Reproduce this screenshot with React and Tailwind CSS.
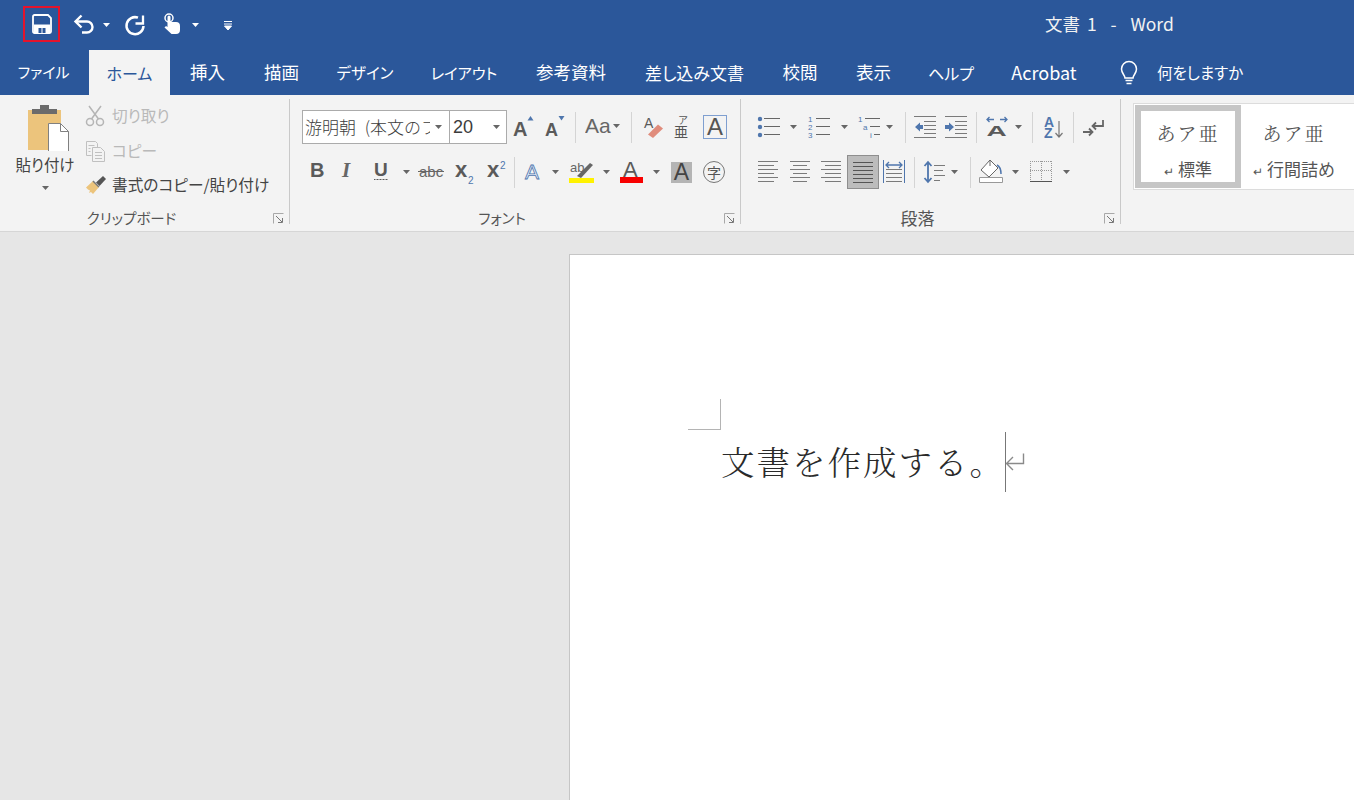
const GR = '#5a5a5a';
const BL = '#4f76ad';
const LN = '#7a7a7a';

function I({ w, h = 24, c = '', children }) {
  return (
    <svg width={w} height={h} viewBox={`0 0 ${w} ${h}`} className={`shrink-0 ${c}`} fill="none">
      {children}
    </svg>
  );
}
const Caret = ({ c = '', color = '#666' }) => (
  <I w={7} h={4} c={c}><path d="M0 0h7L3.5 4z" fill={color} /></I>
);
const Sep = ({ c = '' }) => <div className={`w-px h-[31px] bg-[#d4d4d4] shrink-0 ${c}`} />;
const T = ({ x, y, s, fill = GR, w = 700, st = 'normal', ff = 'Liberation Sans', children }) => (
  <text x={x} y={y} fontSize={s} fill={fill} fontWeight={w} fontStyle={st} fontFamily={ff}>{children}</text>
);
const Lines = ({ l, color = LN }) => (
  <g stroke={color} strokeWidth="1">
    {l.map(([a, b, y], i) => <path key={i} d={`M${a} ${y + 0.5}H${b}`} />)}
  </g>
);
const Launcher = () => (
  <I w={11} h={11}>
    <path d="M0.5 10.5V0.5H10.5" stroke="#a8a8a8" />
    <path d="M3 3l6 6M9.5 5v4.5H5" stroke="#777" />
  </I>
);
const GroupLabel = ({ c = 'text-[14.500px]', children }) => (
  <div className="mt-auto h-[18px] flex items-center shrink-0">
    <div className={`flex-1 text-center leading-[18px] text-[#555] [font-feature-settings:'palt'] ${c}`}>{children}</div>
    <div className="w-[26px] flex justify-end pr-[5px] pt-[1px]"><Launcher /></div>
  </div>
);

const tabs = [
  ['ファイル', 'w-[87px] text-white text-[15px]'],
  ['ホーム', 'w-[81px] ml-[2px] bg-[#f3f3f3] text-[#2b579a] text-[16px]'],
  ['挿入', 'w-[75px] text-white text-[17.500px]'],
  ['描画', 'w-[73px] text-white text-[17.500px]'],
  ['デザイン', 'w-[94px] text-white text-[15.500px]'],
  ['レイアウト', 'w-[104px] text-white text-[15.300px]'],
  ['参考資料', 'w-[110px] text-white text-[17.500px]'],
  ['差し込み文書', 'w-[137px] text-white text-[17px]'],
  ['校閲', 'w-[74px] text-white text-[17.500px]'],
  ['表示', 'w-[73px] text-white text-[17.500px]'],
  ['ヘルプ', 'w-[82px] text-white text-[16px]'],
  ['Acrobat', 'w-[104px] text-white text-[18px]'],
];

function TitleBar() {
  return (
    <div className="h-[50px] bg-[#2b579a] flex items-center shrink-0 text-white">
      <div className="ml-[23px] mt-[-2px] w-[37px] h-[36px] border-2 border-[#e4142c] flex items-center justify-center">
        <I w={20} h={20}>
          <path d="M1 2.500A1.500 1.500 0 0 1 2.500 1H16l3 3v13.500a1.500 1.500 0 0 1-1.500 1.500h-15A1.500 1.500 0 0 1 1 17.500z" stroke="#fff" strokeWidth="1.800" />
          <path d="M2 10.500h16V18H2z" fill="#fff" />
          <path d="M6.500 14h3v5h-3zM10.500 14h3v5h-3z" fill="#2b579a" />
        </I>
      </div>
      <I w={22} h={22} c="ml-[13px]">
        <path d="M8.500 1.500 2.500 7.500l6 6" stroke="#fff" strokeWidth="2.400" />
        <path d="M3 7.500h11a5.500 5.500 0 0 1 0 11H9" stroke="#fff" strokeWidth="2.400" />
      </I>
      <Caret c="ml-[8px]" color="#fff" />
      <I w={22} h={22} c="ml-[14px]">
        <path d="M14 3.700A8.500 8.500 0 1 0 19.500 12" stroke="#fff" strokeWidth="2.500" />
        <path d="M19 1.500V9.500H11.500" stroke="#fff" strokeWidth="2.300" />
      </I>
      <I w={18} h={24} c="ml-[17px]">
        <circle cx="6" cy="5" r="4" stroke="#fff" strokeWidth="1.500" />
        <path d="M4.500 4a1.500 1.500 0 0 1 3 0v5h5.500a4 4 0 0 1 4 4v4a4 4 0 0 1-4 4H8.500L1.500 14.500l1.500-1.500 1.500 1z" fill="#fff" />
      </I>
      <Caret c="ml-[11px]" color="#fff" />
      <I w={8} h={9} c="ml-[25px]">
        <path d="M0 0.500h8M0 3h8M0.500 5h7L4 9z" stroke="#fff" strokeWidth="1" fill="#fff" />
      </I>
      <div className="ml-[813px] text-[17.500px] leading-[20px] mt-[-2px] whitespace-pre [word-spacing:3px] text-[#f2f2f2] [font-feature-settings:'palt']">
        文書 1  -  Word
      </div>
    </div>
  );
}

function TabBar() {
  return (
    <div className="h-[45px] bg-[#2b579a] flex items-stretch shrink-0 [font-feature-settings:'palt']">
      {tabs.map(([t, c]) => (
        <div key={t} className={`flex items-center justify-center ${c}`}>{t}</div>
      ))}
      <I w={22} h={26} c="ml-[22px] self-center">
        <path d="M7 18c0-3-3.500-4.500-3.500-9a7.500 7.500 0 0 1 15 0C18.500 13.500 15 15 15 18z" stroke="#fff" strokeWidth="1.500" />
        <path d="M7.500 20.500h7M8.500 23.500h5" stroke="#fff" strokeWidth="1.500" />
      </I>
      <div className="ml-[17px] flex items-center text-white text-[15.500px]">何をしますか</div>
    </div>
  );
}

function Clipboard() {
  return (
    <div className="w-[289px] h-[128px] flex flex-col shrink-0">
      <div className="flex">
        <div className="ml-[15px] w-[60px] flex flex-col items-center">
          <I w={42} h={47} c="self-start ml-[13px] mt-[5px]">
            <path d="M0 6h33v40H0z" fill="#ecc47c" />
            <path d="M4 5h25v5H4zM12 1h9v5h-9z" fill="#6b6b6b" />
            <path d="M20.500 19.500h12l8 8v21h-20z" fill="#fff" stroke="#808080" />
            <path d="M32.500 19.500v8h8" stroke="#808080" />
          </I>
          <div className="mt-[4px] text-[15.500px] leading-[18px] text-[#444] whitespace-nowrap [font-feature-settings:'palt']">貼り付け</div>
          <Caret c="mt-[13px]" />
        </div>
        <div className="ml-[10px] mt-[5px] flex flex-col gap-[10.500px] text-[15.700px] [font-feature-settings:'palt']">
          <div className="h-[24px] flex items-center text-[#b9b9b9]">
            <I w={20} h={22}>
              <g stroke="#b5b5b5" strokeWidth="1.500">
                <circle cx="5" cy="17" r="3.500" /><circle cx="15" cy="17" r="3.500" />
                <path d="M6.500 14 16 1M13.500 14 4 1" />
              </g>
            </I>
            <span className="ml-[7px]">切り取り</span>
          </div>
          <div className="h-[24px] flex items-center text-[#b9b9b9]">
            <I w={20} h={22}>
              <g stroke="#c0c0c0">
                <path d="M1.500 1.500h9l2 2v4M1.500 1.500v14h5" />
                <path d="M7.500 7.500h8l4 4v10h-12z" />
                <path d="M3.500 5.500h6M3.500 8.500h2M3.500 11.500h2M10 12.500h7M10 15.500h7M10 18.500h7" />
              </g>
            </I>
            <span className="ml-[7px]">コピー</span>
          </div>
          <div className="h-[24px] flex items-center text-[#444]">
            <I w={22} h={20}>
              <path d="M1 12.500 8 6l6 6-6 7-2-2-2 1 1-2.500-2-1z" fill="#ecc47c" />
              <path d="M8 6l6 6" stroke="#7a7a7a" strokeWidth="1.500" />
              <path d="M11 7.500 18 1l3 3-6.500 7z" fill="#555" />
            </I>
            <span className="ml-[5px] whitespace-nowrap">書式のコピー/貼り付け</span>
          </div>
        </div>
      </div>
      <GroupLabel>クリップボード</GroupLabel>
    </div>
  );
}

function Font() {
  return (
    <div className="w-[450px] h-[128px] flex flex-col shrink-0">
      <div className="pl-[12px] pt-[11px] flex items-center h-[45px] shrink-0">
        <div className="w-[148px] h-[34px] bg-white border border-[#ababab] flex items-center shrink-0">
          <div className="w-[127px] pl-[2px] overflow-hidden whitespace-nowrap text-[17px] [word-spacing:5px] text-[#3c3c3c] font-light">游明朝 (本文のフ</div>
          <Caret c="ml-[5px]" />
        </div>
        <div className="w-[57px] h-[34px] bg-white border border-l-0 border-[#ababab] flex items-center shrink-0">
          <span className="ml-[3px] w-[38px] text-[18px] text-[#3c3c3c] font-['Liberation_Sans']">20</span>
          <Caret c="ml-[2px]" />
        </div>
        <I w={22} c="ml-[5px]"><T x={1} y={21} s={20}>A</T><path d="M15.500 5.500h6L18.500 1z" fill={BL} /></I>
        <I w={22} c="ml-[10px]"><T x={1} y={21} s={18}>A</T><path d="M14.500 1h6l-3 4.500z" fill={BL} /></I>
        <Sep c="ml-[9px]" />
        <I w={40} c="ml-[9px]">
          <T x={0} y={18} s={21} fill="#666" w={400}>Aa</T>
          <path d="M28 9h7l-3.500 4z" fill="#666" />
        </I>
        <Sep c="ml-[6px]" />
        <I w={22} c="ml-[10px]">
          <T x={2} y={13} s={14} w={400}>A</T>
          <path d="M6 19.500 16 9.500l5 4-10 9.500z" fill="#e08c7c" />
        </I>
        <I w={18} c="ml-[9px]">
          <text x="5" y="9" fontSize="10" fill="#555" fontFamily="Noto Sans CJK JP">ア</text>
          <text x="1" y="22" fontSize="14" fill="#555" fontFamily="Noto Sans CJK JP">亜</text>
        </I>
        <div className="ml-[12px] w-[24px] h-[24px] border border-[#7f9fd0] flex items-center justify-center text-[24px] leading-none text-[#555] font-['Liberation_Sans'] shrink-0">A</div>
      </div>
      <div className="pl-[12px] mt-[11px] flex items-center h-[34px] shrink-0">
        <I w={20} c="ml-[5px]"><T x={3} y={17} s={20}>B</T></I>
        <I w={20} c="ml-[12px]"><T x={3} y={17} s={21} st="italic" ff="Liberation Serif" fill="#666">I</T></I>
        <I w={20} c="ml-[12px]">
          <T x={3} y={16} s={19}>U</T>
          <path d="M3 19.500h14" stroke={GR} strokeDasharray="1 .5" />
        </I>
        <Caret c="ml-[12px]" />
        <I w={26} c="ml-[8px]">
          <T x={1} y={17} s={15} w={400} fill="#666">abc</T>
          <path d="M0 11.500h26" stroke="#666" />
        </I>
        <I w={20} c="ml-[10px]"><T x={1} y={17} s={22}>x</T><T x={14} y={24} s={10} fill={BL} w={400}>2</T></I>
        <I w={22} c="ml-[11px]"><T x={2} y={17} s={22}>x</T><T x={15} y={9} s={10} fill={BL} w={400}>2</T></I>
        <Sep c="ml-[7px]" />
        <I w={20} c="ml-[9px]">
          <text x={1} y={19} fontSize="21" fontFamily="Liberation Sans" fill="#e4ecf7" stroke={BL} strokeWidth="0.800">A</text>
        </I>
        <Caret c="ml-[8px]" />
        <I w={26} c="ml-[10px]">
          <T x={1} y={12} s={13} w={400} fill="#666">ab</T>
          <path d="M8 16 21 3l3 2-12 13z" fill="#666" />
          <path d="M0 18h25v5H0z" fill="#fff200" />
        </I>
        <Caret c="ml-[8px]" />
        <I w={25} c="ml-[9px]">
          <T x={4} y={17} s={22} w={400}>A</T>
          <path d="M1 17h23v6H1z" fill="#f80000" />
        </I>
        <Caret c="ml-[9px]" />
        <div className="ml-[11px] w-[21px] h-[21px] bg-[#b4b4b4] flex items-center justify-center text-[23px] leading-none text-[#444] font-['Liberation_Sans'] shrink-0">A</div>
        <div className="ml-[11px] w-[22px] h-[22px] rounded-full border border-[#777] flex items-center justify-center text-[14px] leading-none text-[#555] shrink-0">字</div>
      </div>
      <GroupLabel>フォント</GroupLabel>
    </div>
  );
}

const bulletLines = (cx, r) => (
  <g>
    {[4, 12, 20].map((y) => <circle key={y} cx={cx} cy={y} r={r} fill={BL} />)}
    <Lines l={[[7, 23, 3], [7, 23, 11], [7, 23, 19]]} color="#666" />
  </g>
);

function Paragraph() {
  return (
    <div className="w-[379px] h-[128px] flex flex-col shrink-0">
      <div className="pl-[16px] pt-[11px] flex items-center h-[45px] shrink-0">
        <I w={23}>{bulletLines(3, 2.200)}</I>
        <Caret c="ml-[10px]" />
        <I w={23} c="ml-[10px]">
          <text fontSize="8" fontFamily="Liberation Sans" fill={BL}><tspan x="1" y="7">1</tspan><tspan x="1" y="15">2</tspan><tspan x="1" y="23">3</tspan></text>
          <Lines l={[[9, 23, 3], [9, 23, 11], [9, 23, 19]]} color="#666" />
        </I>
        <Caret c="ml-[11px]" />
        <I w={23} c="ml-[9px]">
          <text fontSize="8" fontFamily="Liberation Sans" fill={BL}><tspan x="1" y="7">1</tspan><tspan x="6" y="15">a</tspan><tspan x="13" y="23">i</tspan></text>
          <Lines l={[[8, 23, 3], [13, 23, 11], [17, 23, 19]]} color="#666" />
        </I>
        <Caret c="ml-[6px]" />
        <Sep c="ml-[12px]" />
        <I w={22} c="ml-[8px]">
          <Lines l={[[0, 22, 1], [10, 22, 6], [10, 22, 10], [10, 22, 14], [10, 22, 18], [0, 22, 22]]} />
          <path d="M1 12l5-4.500V10h3v4H6v2.500z" fill={BL} />
        </I>
        <I w={22} c="ml-[9px]">
          <Lines l={[[0, 22, 1], [10, 22, 6], [10, 22, 10], [10, 22, 14], [10, 22, 18], [0, 22, 22]]} />
          <path d="M9 12 4 7.500V10H0v4h4v2.500z" fill={BL} />
        </I>
        <Sep c="ml-[9px]" />
        <I w={22} c="ml-[9px]">
          <text transform="translate(0.500 21) scale(1.650 0.900)" fontSize="17" fontWeight="700" fontFamily="Liberation Sans" fill={GR}>A</text>
          <path d="M1 4.500h7M3.500 2 1 4.500 3.500 7M14 4.500h7M18.500 2 21 4.500 18.500 7" stroke={BL} strokeWidth="1.300" />
        </I>
        <Caret c="ml-[7px]" />
        <Sep c="ml-[10px]" />
        <I w={20} c="ml-[11px]">
          <T x={0} y={12} s={14} fill={BL}>A</T>
          <T x={0} y={23} s={14} fill={BL}>Z</T>
          <path d="M15 6v16M11.500 18l3.500 4 3.500-4" stroke="#777" strokeWidth="1.200" />
        </I>
        <Sep c="ml-[9px]" />
        <I w={21} c="ml-[9px]">
          <path d="M20 5v6h-10M13 7.500 9.500 11l3.500 3.500" stroke="#666" strokeWidth="1.800" />
          <path d="M0 17h9M6 13.500 9.500 17 6 20.500" stroke="#666" strokeWidth="1.800" />
        </I>
      </div>
      <div className="pl-[16px] mt-[11px] flex items-center h-[34px] shrink-0">
        <I w={20} c="ml-[1px]"><Lines l={[[0, 20, 1], [0, 16, 5], [0, 20, 9], [0, 16, 13], [0, 20, 17], [0, 16, 21]]} /></I>
        <I w={20} c="ml-[12px]"><Lines l={[[0, 20, 1], [3, 17, 5], [0, 20, 9], [3, 17, 13], [0, 20, 17], [3, 17, 21]]} /></I>
        <I w={20} c="ml-[11px]"><Lines l={[[0, 20, 1], [4, 20, 5], [0, 20, 9], [4, 20, 13], [0, 20, 17], [4, 20, 21]]} /></I>
        <div className="ml-[6px] w-[32px] h-[34px] bg-[#bcbcbc] border border-[#8e8e8e] flex items-center justify-center shrink-0">
          <I w={20}><Lines l={[[0, 20, 2], [0, 20, 6], [0, 20, 10], [0, 20, 14], [0, 20, 18], [0, 20, 22]]} color="#555" /></I>
        </div>
        <I w={22} c="ml-[4px]">
          <Lines l={[[3, 19, 9], [3, 19, 13], [3, 19, 17], [3, 19, 21]]} />
          <path d="M0.500 0v23M21.500 0v23" stroke={BL} />
          <path d="M3 5h16M6 2 3 5l3 3M16 2l3 3-3 3" stroke={BL} strokeWidth="1.300" />
        </I>
        <Sep c="ml-[9px]" />
        <I w={22} c="ml-[8px]">
          <path d="M5 2v20M1.500 6 5 2l3.500 4M1.500 18 5 22l3.500-4" stroke={BL} strokeWidth="1.800" />
          <Lines l={[[11, 22, 5], [11, 20, 10], [11, 22, 15], [11, 17, 20]]} />
        </I>
        <Caret c="ml-[6px]" />
        <Sep c="ml-[12px]" />
        <I w={24} c="ml-[8px]">
          <path d="M11 0 2 10l8 7 9-9z" fill="#fff" stroke="#666" />
          <path d="M11 0v6" stroke="#666" />
          <path d="M18 5c4 2 4 6 4 9" stroke={BL} strokeWidth="1.500" />
          <path d="M0.500 17.500h23v5H0.500z" fill="#fff" stroke="#999" />
        </I>
        <Caret c="ml-[9px]" />
        <I w={22} c="ml-[11px]">
          <g stroke="#999" strokeDasharray="1 1">
            <path d="M0.500 1v20M11.500 1v20M21.500 1v20M0 1.500h22M0 10.500h22" />
          </g>
          <path d="M0 21.500h22" stroke="#555" />
        </I>
        <Caret c="ml-[11px]" />
      </div>
      <GroupLabel c="text-[17px]">段落</GroupLabel>
    </div>
  );
}

function Styles() {
  const head = "text-[19px] leading-[24px] tracking-[2px] font-['Noto_Serif_CJK_JP','Noto_Sans_CJK_JP',serif]";
  return (
    <div className="flex-1 min-w-0 ml-[12px] mt-[4px] h-[87px] bg-white border-y border-l border-[#dcdcdc] flex pl-px pt-px text-[#555]">
      <div className="w-[106px] h-[83px] border-[6px] border-[#c6c6c6] flex flex-col items-center shrink-0">
        <div className={`mt-[10px] ${head}`}>あア亜</div>
        <div className="mt-[14px] text-[17px] leading-[20px]"><span className="text-[12px] mr-[4px]">↵</span>標準</div>
      </div>
      <div className="w-[106px] h-[83px] flex flex-col items-center shrink-0 pt-[6px]">
        <div className={`mt-[10px] ${head}`}>あア亜</div>
        <div className="mt-[14px] text-[17px] leading-[20px] whitespace-nowrap"><span className="text-[12px] mr-[4px]">↵</span>行間詰め</div>
      </div>
    </div>
  );
}

function Ribbon() {
  return (
    <div className="h-[137px] bg-[#f3f3f3] border-b border-[#d6d6d6] pt-[4px] flex shrink-0">
      <Clipboard />
      <div className="w-px h-[125px] bg-[#c9c9c9] shrink-0" />
      <Font />
      <div className="w-px h-[125px] bg-[#c9c9c9] shrink-0" />
      <Paragraph />
      <div className="w-px h-[125px] bg-[#c9c9c9] shrink-0" />
      <Styles />
    </div>
  );
}

function Page() {
  return (
    <div className="flex-1 min-h-0 bg-[#e6e6e6] pt-[22px] pl-[569px] flex">
      <div className="flex-1 bg-white border-l border-t border-[#c6c6c6] pl-[118px] pt-[144px]">
        <div className="w-[33px] h-[31px] border-r border-b border-[#b4b4b4]" />
        <div className="ml-[33px] mt-[2px] h-[60px] flex items-start">
          <div className="w-[284px] mt-[7px] text-[33.500px] leading-[44px] tracking-[2px] text-[#2a2a2a] font-light font-['Noto_Serif_CJK_JP','Noto_Sans_CJK_JP',serif] whitespace-nowrap">文書を作成する。</div>
          <div className="w-px h-[60px] bg-[#777] shrink-0" />
          <I w={21} h={21} c="mt-[20px] ml-[-1px]">
            <path d="M18.500 1.500v10H1.500M8 5 1.500 11.500 8 18" stroke="#8a8a8a" strokeWidth="1.400" />
          </I>
        </div>
      </div>
    </div>
  );
}

export default function App() {
  return (
    <div className="w-[1354px] h-[800px] overflow-hidden flex flex-col bg-[#e6e6e6] font-['Noto_Sans_CJK_JP','Liberation_Sans',sans-serif]">
      <TitleBar />
      <TabBar />
      <Ribbon />
      <Page />
    </div>
  );
}
